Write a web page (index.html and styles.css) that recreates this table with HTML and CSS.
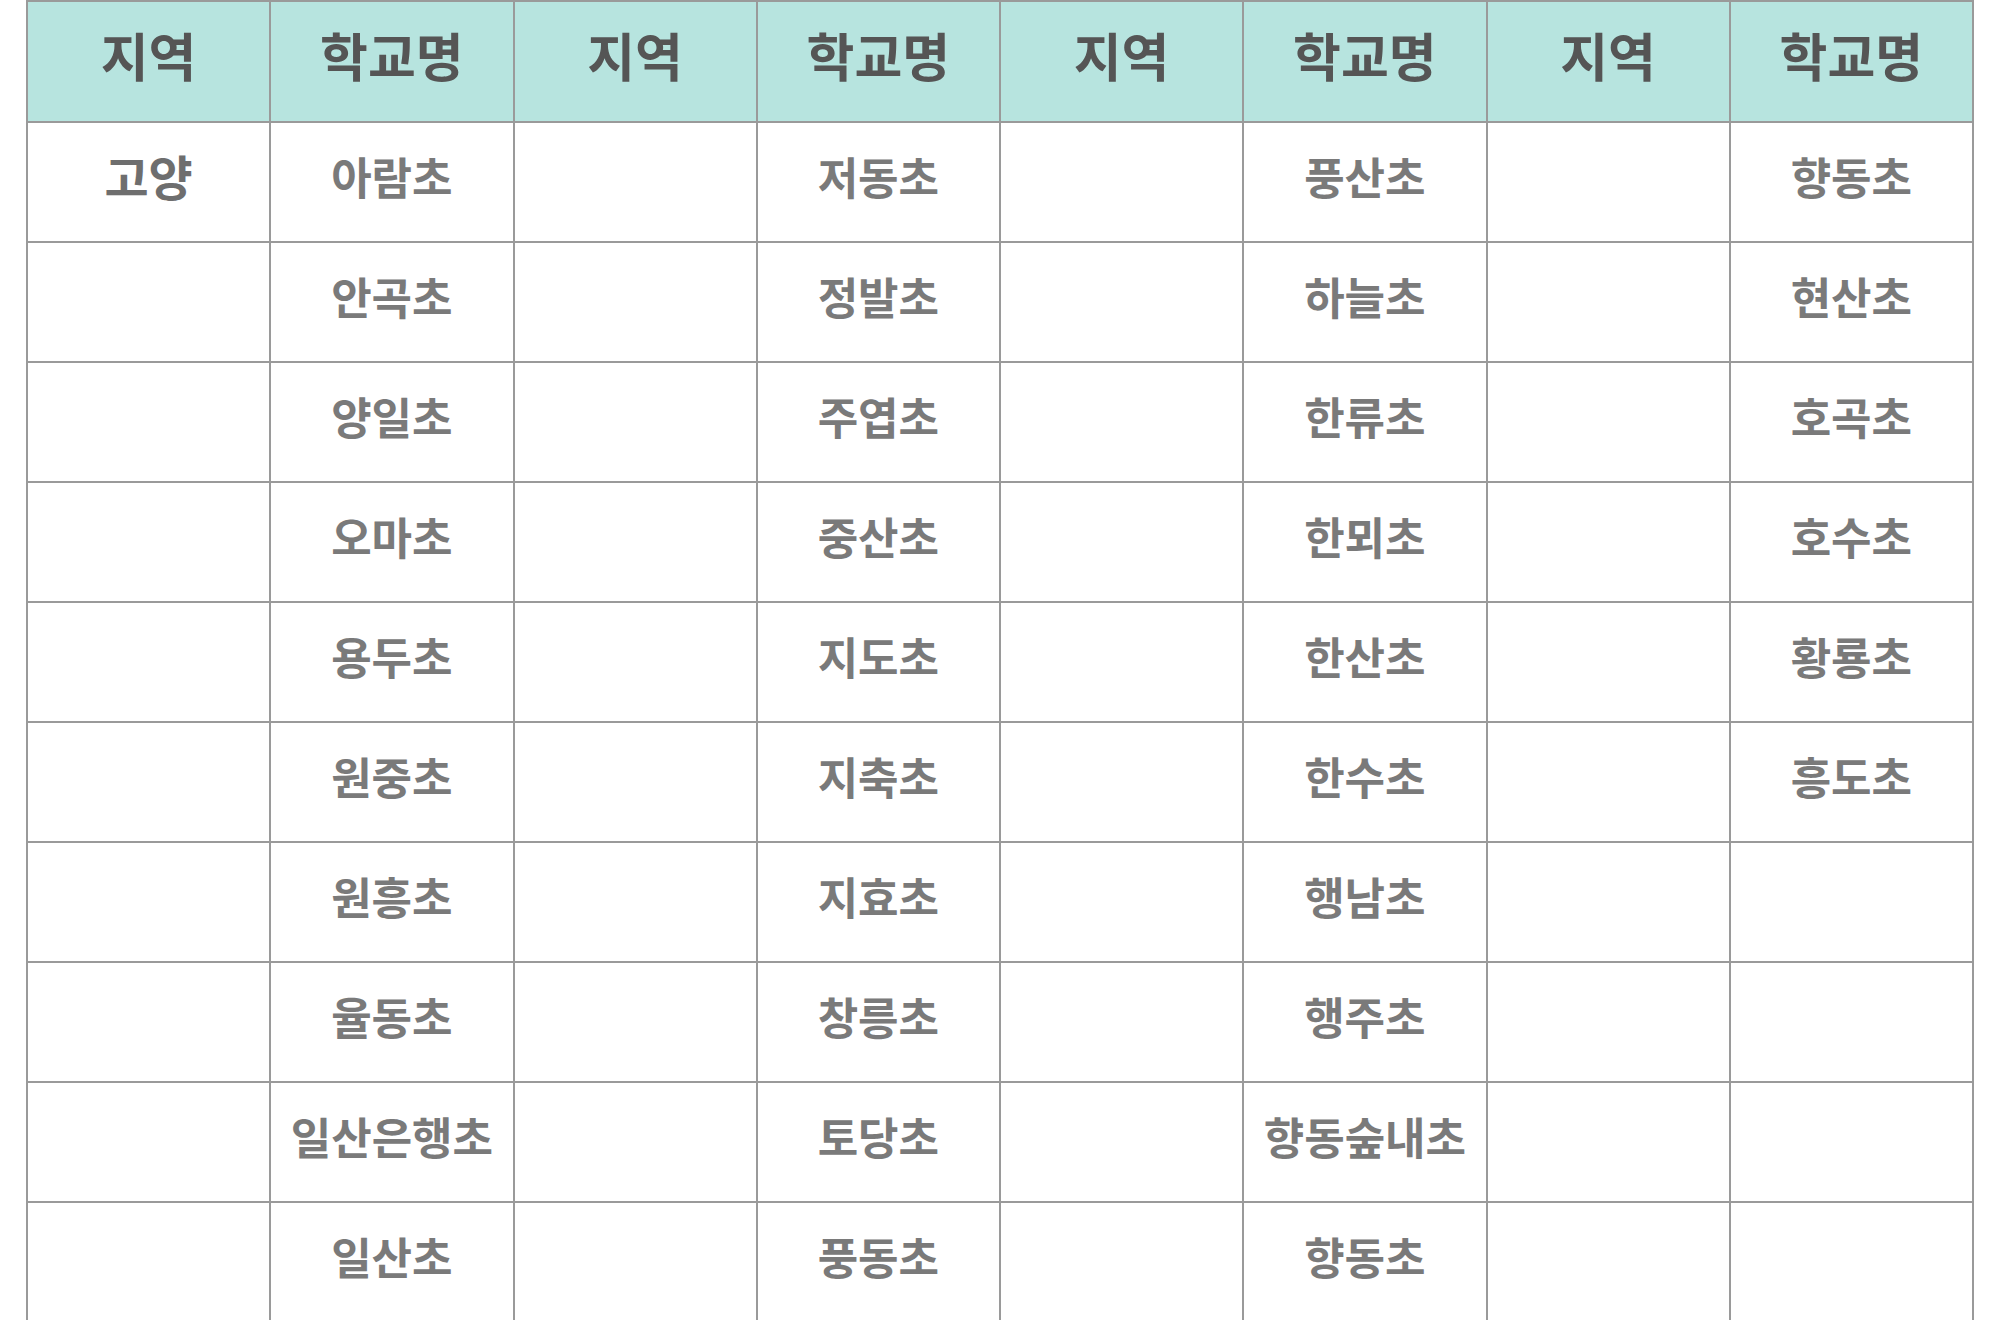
FILE: index.html
```html
<!DOCTYPE html>
<html lang="ko">
<head>
<meta charset="utf-8">
<link rel="stylesheet" href="styles.css">
</head>
<body>
<div class="wrap">
<table class="schools">
<thead>
<tr><th>지역</th><th>학교명</th><th>지역</th><th>학교명</th><th>지역</th><th>학교명</th><th>지역</th><th>학교명</th></tr>
</thead>
<tbody>
<tr><td class="region">고양</td><td>아람초</td><td></td><td>저동초</td><td></td><td>풍산초</td><td></td><td>향동초</td></tr>
<tr><td></td><td>안곡초</td><td></td><td>정발초</td><td></td><td>하늘초</td><td></td><td>현산초</td></tr>
<tr><td></td><td>양일초</td><td></td><td>주엽초</td><td></td><td>한류초</td><td></td><td>호곡초</td></tr>
<tr><td></td><td>오마초</td><td></td><td>중산초</td><td></td><td>한뫼초</td><td></td><td>호수초</td></tr>
<tr><td></td><td>용두초</td><td></td><td>지도초</td><td></td><td>한산초</td><td></td><td>황룡초</td></tr>
<tr><td></td><td>원중초</td><td></td><td>지축초</td><td></td><td>한수초</td><td></td><td>흥도초</td></tr>
<tr><td></td><td>원흥초</td><td></td><td>지효초</td><td></td><td>행남초</td><td></td><td></td></tr>
<tr><td></td><td>율동초</td><td></td><td>창릉초</td><td></td><td>행주초</td><td></td><td></td></tr>
<tr><td></td><td>일산은행초</td><td></td><td>토당초</td><td></td><td>향동숲내초</td><td></td><td></td></tr>
<tr><td></td><td>일산초</td><td></td><td>풍동초</td><td></td><td>향동초</td><td></td><td></td></tr>
</tbody>
</table>
</div>
</body>
</html>
```

FILE: styles.css
```css
html, body {
  margin: 0;
  padding: 0;
  background: #ffffff;
}
.wrap {
  padding: 0 26px;
  height: 1320px;
  overflow: hidden;
}
.schools {
  width: 100%;
  border-collapse: collapse;
  table-layout: fixed;
  font-family: "Noto Sans CJK KR", "Noto Sans", sans-serif;
}
.schools th,
.schools td {
  border: 2px solid #9a9a9a;
  text-align: center;
  vertical-align: middle;
  padding: 0 0 12px 0;
  line-height: 1.2;
}
.schools th {
  background: #b7e4df;
  color: #555555;
  font-size: 52px;
  font-weight: 700;
  height: 107px;
}
.schools td {
  color: #7a7a7a;
  font-size: 44px;
  font-weight: 700;
  height: 106px;
}
.schools td.region {
  color: #6e6e6e;
  font-size: 48px;
}
```
